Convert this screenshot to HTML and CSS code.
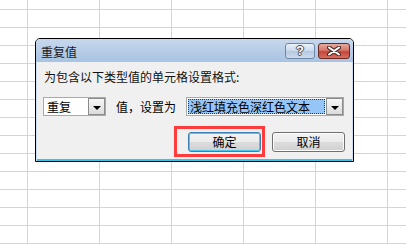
FILE: index.html
```html
<!DOCTYPE html>
<html>
<head>
<meta charset="utf-8">
<link rel="stylesheet" href="styles.css">
</head>
<body>
<div class="dialog">
  <div class="titlebar">
    <span class="title">重复值</span>
    <div class="caps">
      <div class="cap help">?</div>
      <div class="cap close">
        <svg width="14" height="10" viewBox="0 0 14 10">
          <path d="M2 1.5 L12 8.5 M12 1.5 L2 8.5" stroke="#4a2a26" stroke-width="4" stroke-linecap="round"/>
          <path d="M2 1.5 L12 8.5 M12 1.5 L2 8.5" stroke="#ffffff" stroke-width="2" stroke-linecap="round"/>
        </svg>
      </div>
    </div>
  </div>
  <div class="content">
    <div class="prompt">为包含以下类型值的单元格设置格式:</div>
    <div class="row">
      <div class="combo small">
        <span class="val">重复</span>
        <span class="drop"><i class="arrow"></i></span>
      </div>
      <span class="lbl">值，设置为</span>
      <div class="combo wide">
        <span class="sel">浅红填充色深红色文本</span>
        <span class="drop"><i class="arrow"></i></span>
      </div>
    </div>
    <div class="btns">
      <div class="btn ok">确定</div>
      <div class="btn">取消</div>
    </div>
  </div>
  <div class="mark"></div>
</div>
</body>
</html>
```
FILE: styles.css
```css
html, body {
  margin: 0;
  padding: 0;
}
body {
  width: 406px;
  height: 244px;
  overflow: hidden;
  background-color: #ffffff;
  background-image:
    linear-gradient(to right, #d4d4de 1px, transparent 1px),
    linear-gradient(to bottom, #d4d4de 1px, transparent 1px);
  background-size: 72px 18px;
  background-position: 27px 9px;
  font-family: "Noto Sans CJK SC", "Noto Sans", sans-serif;
  font-size: 12px;
  color: #000;
  position: relative;
}
.dialog {
  position: absolute;
  left: 35px;
  top: 38px;
  width: 319px;
  height: 124px;
  box-sizing: border-box;
  border: 1px solid #000;
  border-radius: 5px 5px 0 0;
  background: #f0f0f0;
  box-shadow: inset 1px 0 #cddff1, inset -1px 0 #cddff1, inset 0 -2px #36c3ec;
  display: flex;
  flex-direction: column;
}
.titlebar {
  height: 23px;
  display: flex;
  justify-content: space-between;
  align-items: flex-start;
  background: linear-gradient(#c7d8ec, #a8c3e3);
  border-radius: 4px 4px 0 0;
  padding: 0 3px 0 5px;
}
.title {
  line-height: 14px;
  margin-top: 6px;
  color: #1a1a1a;
}
.caps {
  display: flex;
  gap: 3px;
  margin-top: 4px;
}
.cap {
  height: 16px;
  box-sizing: border-box;
  border-radius: 3px;
  display: flex;
  align-items: center;
  justify-content: center;
}
.help {
  width: 30px;
  border: 1px solid #6f87a6;
  background: linear-gradient(#eaf1f9 0, #c9d9ec 50%, #b3c8e2 51%, #cfdcec 100%);
  font-family: "Liberation Sans", sans-serif;
  font-weight: bold;
  font-size: 13px;
  line-height: 14px;
  color: #ffffff;
  text-shadow: 1px 0 #3b4a5e, -1px 0 #3b4a5e, 0 1px #3b4a5e, 0 -1px #3b4a5e;
}
.close {
  width: 32px;
  border: 1px solid #6a2a22;
  background: linear-gradient(#e8a99c 0, #d6766a 45%, #c4463a 55%, #d86f60 100%);
}
.content {
  flex: 1;
  padding: 8px 8px 0 7px;
  display: flex;
  flex-direction: column;
}
.prompt {
  line-height: 14px;
  padding-left: 1px;
  color: #111;
}
.row {
  margin-top: 13px;
  display: flex;
  align-items: center;
  height: 19px;
}
.combo {
  height: 19px;
  box-sizing: border-box;
  border: 1px solid #a9a9a9;
  background: #fff;
  display: flex;
  align-items: center;
  justify-content: space-between;
}
.small {
  width: 63px;
}
.wide {
  width: 158px;
  margin-left: 10px;
  padding-left: 1px;
}
.val {
  padding-left: 3px;
  line-height: 14px;
}
.lbl {
  margin-left: 10px;
  line-height: 14px;
}
.sel {
  width: 137px;
  height: 15px;
  box-sizing: border-box;
  background: #96c6f8;
  border: 1px dotted #3a3a3a;
  line-height: 13px;
  padding-left: 1px;
  overflow: hidden;
  white-space: nowrap;
}
.drop {
  width: 17px;
  height: 17px;
  box-sizing: border-box;
  border: 1px solid #8c8c8c;
  background: linear-gradient(#f7f7f7, #dcdcdc);
  display: flex;
  align-items: center;
  justify-content: center;
}
.arrow {
  width: 0;
  height: 0;
  border-left: 4px solid transparent;
  border-right: 4px solid transparent;
  border-top: 4px solid #000;
  margin-top: 2px;
}
.btns {
  margin-top: 16px;
  display: flex;
  justify-content: flex-end;
  gap: 11px;
}
.btn {
  width: 73px;
  height: 20px;
  box-sizing: border-box;
  border: 1px solid #707070;
  border-radius: 3px;
  box-shadow: inset 0 0 0 1px #fbfbfb;
  background: linear-gradient(#f3f3f3 0, #ebebeb 50%, #dddddd 51%, #cfcfcf 100%);
  display: flex;
  align-items: center;
  justify-content: center;
  line-height: 14px;
}
.ok {
  border-color: #3c7fb1;
  box-shadow: inset 0 0 0 1px #48c8f2;
}
.mark {
  position: absolute;
  left: 138px;
  top: 87px;
  width: 91px;
  height: 31px;
  box-sizing: border-box;
  border: 3px solid #ff3b3b;
}
```
